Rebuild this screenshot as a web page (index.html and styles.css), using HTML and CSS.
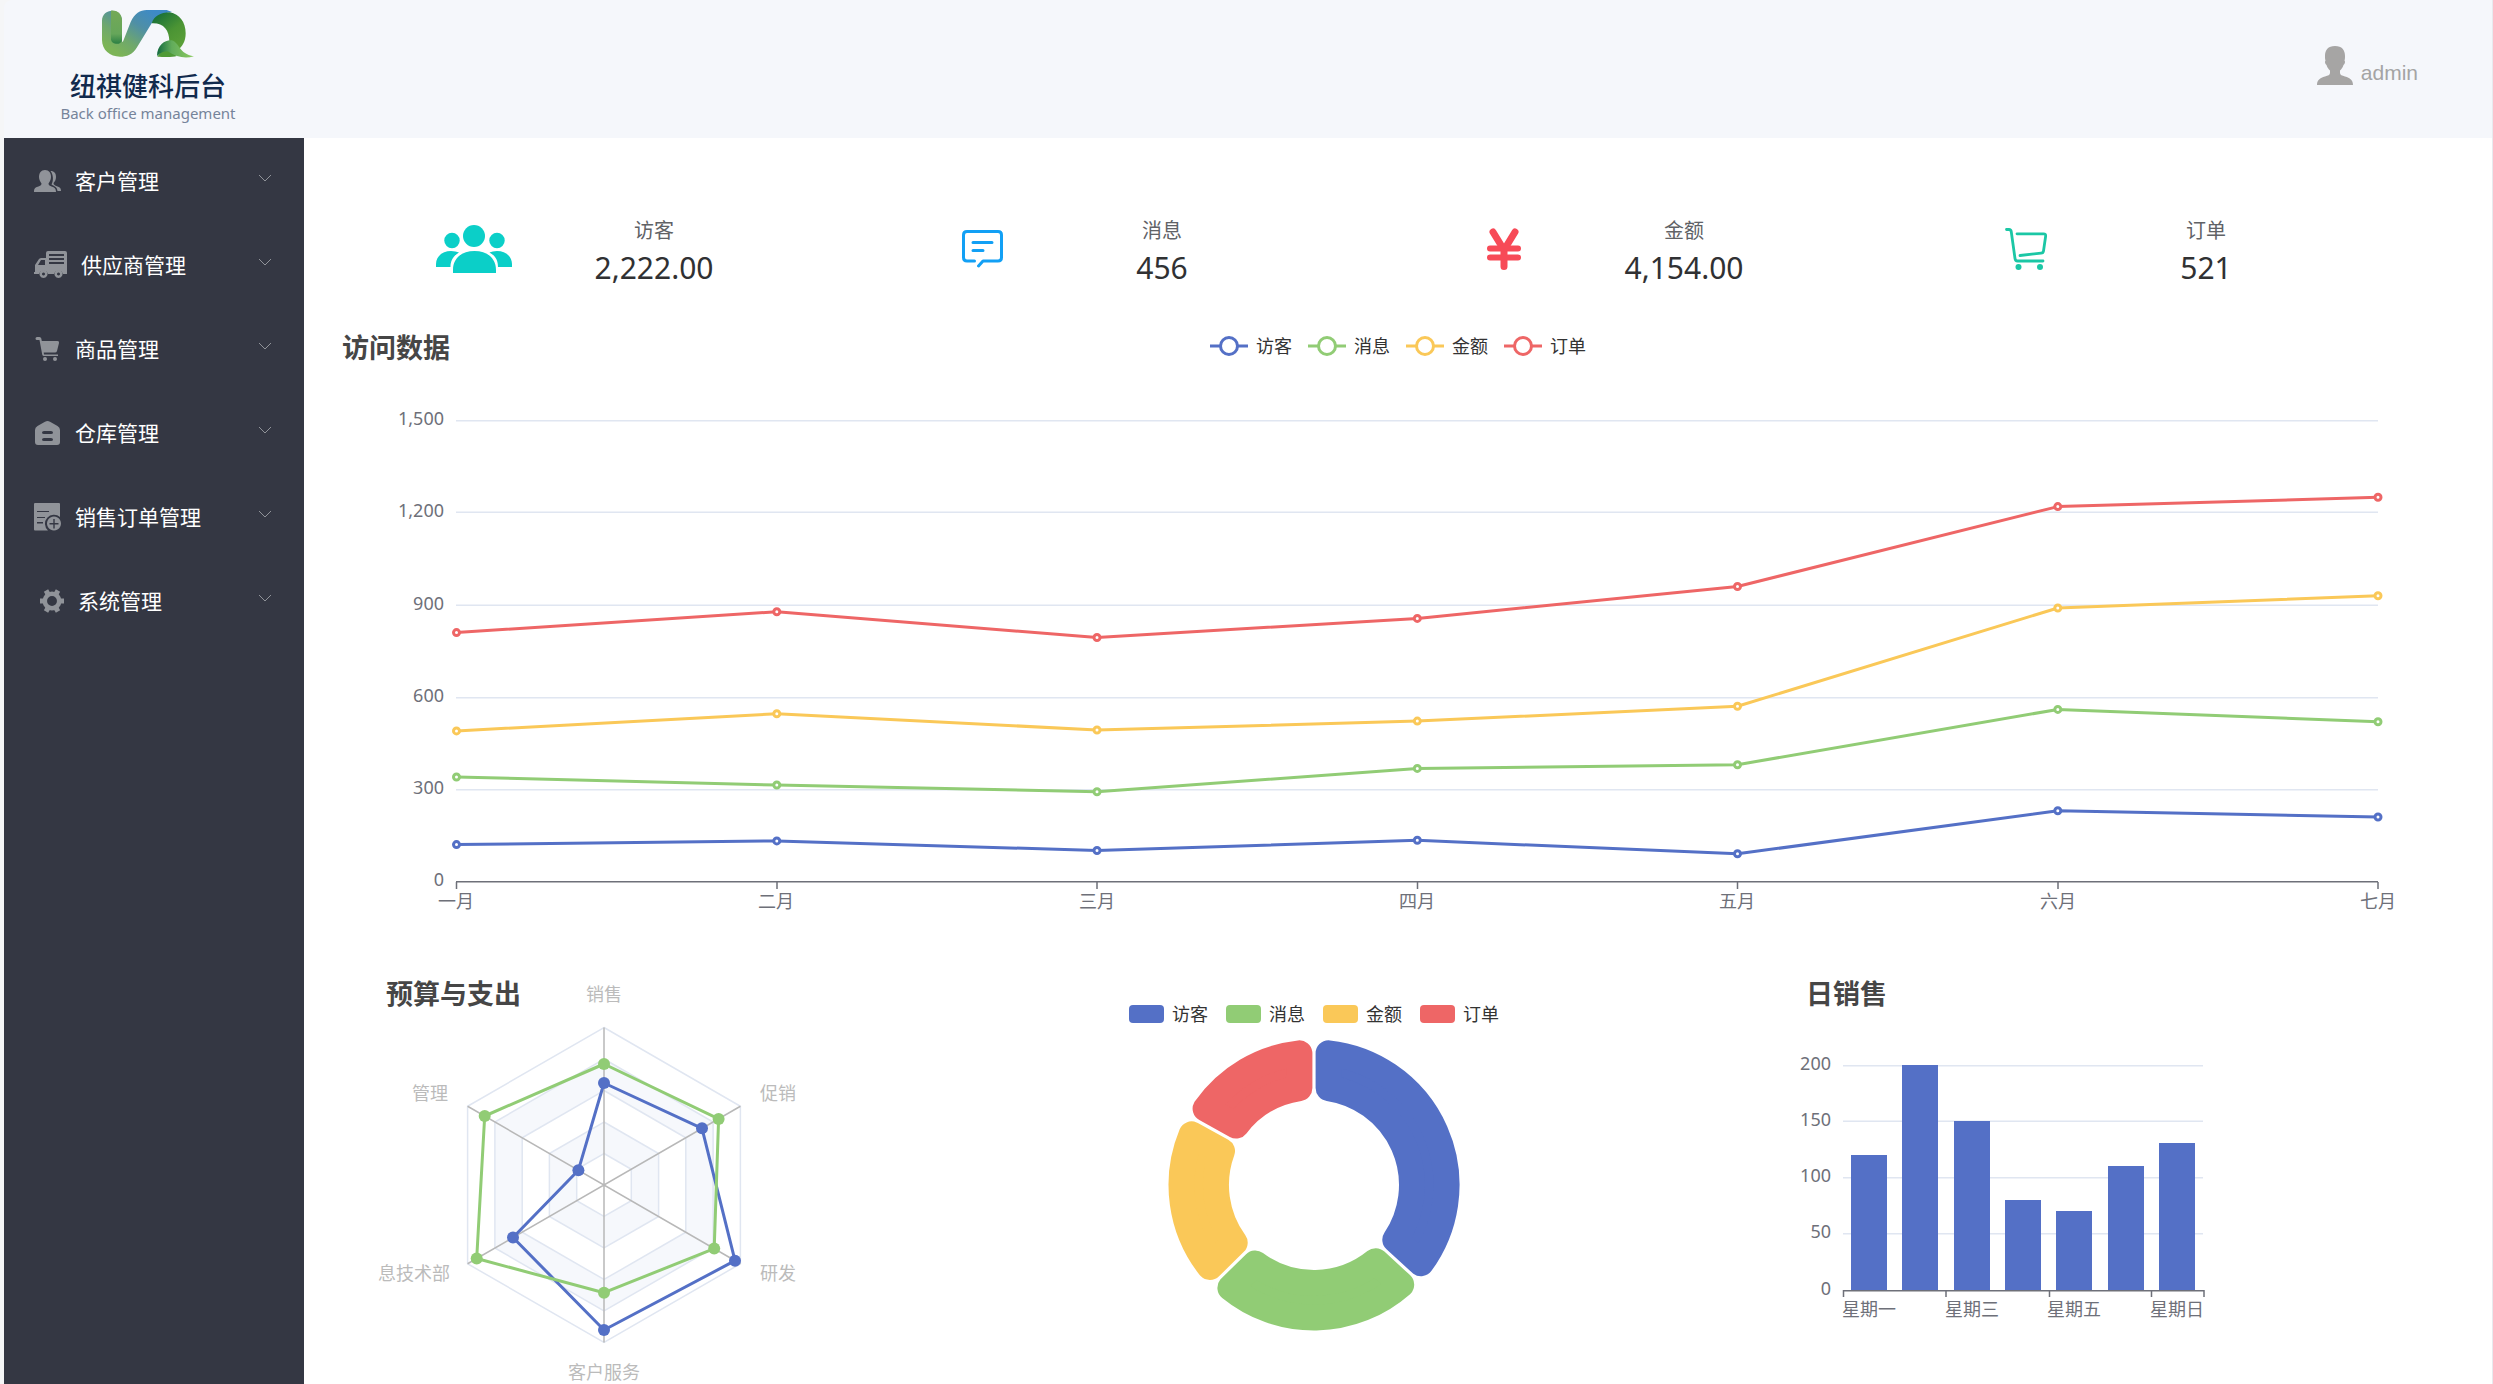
FILE: index.html
```html
<!DOCTYPE html>
<html lang="zh-CN">
<head>
<meta charset="utf-8">
<meta name="viewport" content="width=device-width, initial-scale=1">
<title>纽祺健科后台</title>
<link rel="stylesheet" href="styles.css">
</head>
<body>
<header class="topbar">
  <a class="brand" href="#">
    <svg class="brand-logo" viewBox="306 30 276 144" aria-hidden="true">
      <defs>
        <linearGradient id="ribbon" x1="0" y1="1" x2="1" y2="0">
          <stop offset="0.15" stop-color="#7cb457"/><stop offset="0.35" stop-color="#6fa86c"/><stop offset="0.6" stop-color="#4f8fa6"/><stop offset="0.85" stop-color="#3d8ac6"/>
        </linearGradient>
        <linearGradient id="fold" x1="0" y1="0" x2="0" y2="1">
          <stop offset="0" stop-color="#74a957"/><stop offset="0.7" stop-color="#66a65a"/><stop offset="1" stop-color="#2b7f43"/>
        </linearGradient>
        <linearGradient id="arch" x1="0" y1="0" x2="0.7" y2="1">
          <stop offset="0.1" stop-color="#176f38"/><stop offset="0.6" stop-color="#4b9434"/><stop offset="1" stop-color="#5a9f38"/>
        </linearGradient>
        <linearGradient id="leaf" x1="0" y1="0" x2="1" y2="0">
          <stop offset="0" stop-color="#11693d"/><stop offset="0.4" stop-color="#62ac5b"/><stop offset="1" stop-color="#8ccb60"/>
        </linearGradient>
      </defs>
      <path fill="url(#ribbon)" d="M306 62C306 22 366 22 366 62V122C367 128 368 127 370 122L392 66C404 40 420 30 440 30H500L516 36C484 40 470 50 455 70L412 140C398 164 380 170 360 170C330 170 306 150 306 120Z"/>
      <path fill="url(#fold)" d="M333 32C355 30 366 45 366 62V122A17 14 0 0 1 333 118Z"/>
      <path fill="url(#arch)" d="M455 70C462 48 480 38 510 37C538 42 557 66 557 100C557 124 547 140 534 150L508 124C508 90 490 68 455 70Z"/>
      <path fill="#4f9a36" d="M472 170C485 148 505 144 530 168C520 172 490 171 472 170Z"/>
      <path fill="url(#leaf)" d="M471 168C471 132 500 118 515 121C540 128 535 162 582 169C556 177 530 172 503 154C492 154 482 158 471 168Z"/>
    </svg>
    <span class="brand-name">纽祺健科后台</span>
    <span class="brand-sub">Back office management</span>
  </a>
  <a class="account" href="#">
    <svg class="account-icon" viewBox="0 0 36 39" aria-hidden="true"><path d="M18 0C25 0 28 4 28 10C28 12 28 13 27.500 14.500C28.500 15.500 28 18 26.500 19C25.500 22 24.500 23 23 24.500V27C23 29 25 29.500 28 30.500C33 32 36 34 36 39H0C0 34 3 32 8 30.500C11 29.500 13 29 13 27V24.500C11.500 23 10.500 22 9.500 19C8 18 7.500 15.500 8.500 14.500C8 13 8 12 8 10C8 4 11 0 18 0Z"/></svg>
    <span>admin</span>
  </a>
</header>

<div class="layout">
  <nav class="sidebar" aria-label="主菜单">
    <button class="menu-item" type="button">
      <svg width="27" height="24" viewBox="0 0 27 24" aria-hidden="true"><path d="M11 1C15 1 17 4 17 8C17 11 15.500 13 14.500 14.500C14.500 16 15.500 16.500 17 17.200C20 18.300 22 19 22 23H0C0 19 1.500 18.300 5 17.200C6.500 16.500 7.500 16 7.500 14.500C6.500 13 5 11 5 8C5 4 7 1 11 1ZM16.500 2C20.500 2 22 4.500 22 8C22 10.500 21 12.500 19.500 14C19.500 16 21 16.500 23 17.200C26 18.300 27 19 27 22H23.500C23 18 21 17.500 17.500 15.500C20 11 19 5 16.500 2Z"/></svg>
      <span>客户管理</span>
      <svg class="chevron" width="14" height="8" viewBox="0 0 14 8" aria-hidden="true"><path d="M1 1L7 7L13 1"/></svg>
    </button>
    <button class="menu-item" type="button">
      <svg width="33" height="28" viewBox="0 0 33 28" aria-hidden="true"><path fill-rule="evenodd" d="M14 0H31Q33 0 33 2V23H29A4.700 4.700 0 0 0 20 23H14A4.700 4.700 0 0 0 5 23H0V21H1V14L5 8Q6 7 7.500 7H12V2Q12 0 14 0ZM15 3V5H30V3ZM15 7V9H30V7ZM15 11V13H30V11ZM7 9L4 14H11V9Z"/><path fill-rule="evenodd" d="M9.500 19A4 4 0 1 1 9.490 19ZM9.500 21.500A1.500 1.500 0 1 0 9.510 21.500ZM24.500 19A4 4 0 1 1 24.490 19ZM24.500 21.500A1.500 1.500 0 1 0 24.510 21.500Z"/></svg>
      <span>供应商管理</span>
      <svg class="chevron" width="14" height="8" viewBox="0 0 14 8" aria-hidden="true"><path d="M1 1L7 7L13 1"/></svg>
    </button>
    <button class="menu-item" type="button">
      <svg width="27" height="24" viewBox="0 0 27 24" aria-hidden="true"><path d="M3 0H5.500Q7 0 7.300 1.500L7.800 4H23.500Q25.500 4 25 6L23 14Q22.500 15.500 21 15.500H9.700L10 17.500H24V19H10Q8.500 19 8.200 17.500L5.500 3H3A1.500 1.500 0 0 1 3 0Z"/><circle cx="11" cy="22" r="2"/><circle cx="21" cy="22" r="2"/></svg>
      <span>商品管理</span>
      <svg class="chevron" width="14" height="8" viewBox="0 0 14 8" aria-hidden="true"><path d="M1 1L7 7L13 1"/></svg>
    </button>
    <button class="menu-item" type="button">
      <svg width="27" height="24" viewBox="0 0 27 24" aria-hidden="true"><path fill-rule="evenodd" d="M11 .8Q13.500 -.6 16 .8L23.500 5Q26 6.500 26 9V21Q26 24 23 24H4Q1 24 1 21V9Q1 6.500 3.500 5ZM10 10Q8 10 8 11.500T10 13H17Q19 13 19 11.500T17 10ZM10 17Q8 17 8 18.500T10 20H17Q19 20 19 18.500T17 17Z"/></svg>
      <span>仓库管理</span>
      <svg class="chevron" width="14" height="8" viewBox="0 0 14 8" aria-hidden="true"><path d="M1 1L7 7L13 1"/></svg>
    </button>
    <button class="menu-item" type="button">
      <svg width="27" height="28" viewBox="0 0 27 28" aria-hidden="true"><path fill-rule="evenodd" d="M1 0H25Q26 0 26 1V14A8 8 0 0 0 14 27.500H1Q0 27.500 0 26.500V1Q0 0 1 0ZM3 8V9H15V8ZM3 14V15H11V14ZM3 19V20.500H9V19Z"/><path fill-rule="evenodd" d="M20 13.500A7 7 0 1 1 19.990 13.500ZM19.300 16V20H15.500V21.400H19.300V25.500H20.700V21.400H24.500V20H20.700V16Z"/></svg>
      <span>销售订单管理</span>
      <svg class="chevron" width="14" height="8" viewBox="0 0 14 8" aria-hidden="true"><path d="M1 1L7 7L13 1"/></svg>
    </button>
    <button class="menu-item" type="button">
      <svg width="30" height="24" viewBox="0 0 30 24" aria-hidden="true"><g transform="translate(18 12)"><circle r="7.200" fill="none" stroke="#909399" stroke-width="4.500"/><g stroke="#909399" stroke-width="5"><path d="M-12 0H-8M8 0H12M-6 -10.400L-4 -7M6 -10.400L4 -7M-6 10.400L-4 7M6 10.400L4 7"/></g></g></svg>
      <span>系统管理</span>
      <svg class="chevron" width="14" height="8" viewBox="0 0 14 8" aria-hidden="true"><path d="M1 1L7 7L13 1"/></svg>
    </button>
  </nav>

  <main class="content">
    <section class="stats" aria-label="统计">
      <div class="stat">
        <div class="stat-icon"><svg width="76" height="48" viewBox="0 0 76 48" fill="#0bcfc8" aria-hidden="true"><circle cx="38" cy="11" r="11"/><ellipse cx="16" cy="15.500" rx="7.700" ry="7.800"/><ellipse cx="61" cy="15.500" rx="7.700" ry="7.800"/><path d="M17 48V45C17 33 26 26 38.500 26S60 33 60 45V48ZM0 42V39C0 31 7 26 15 26C18 26 21 26.800 23 27.500C17 31 14.500 36 14.500 42ZM76 42V39C76 31 69 26 61 26C58 26 55.500 26.800 53.500 27.500C60 31 62 36 62 42Z"/></svg></div>
        <dl class="stat-text"><dt>访客</dt><dd>2,222.00</dd></dl>
      </div>
      <div class="stat">
        <div class="stat-icon"><svg width="41" height="38" viewBox="0 0 41 38" fill="none" stroke="#12a0f5" stroke-width="3" stroke-linecap="round" stroke-linejoin="round" aria-hidden="true"><path d="M12.500 31H5Q1.500 31 1.500 27.500V5Q1.500 1.500 5 1.500H36Q39.500 1.500 39.500 5V27.500Q39.500 31 36 31H21L16.500 36M11 12.500H30M11 20.500H21"/></svg></div>
        <dl class="stat-text"><dt>消息</dt><dd>456</dd></dl>
      </div>
      <div class="stat">
        <div class="stat-icon"><svg width="34" height="42" viewBox="0 0 34 42" fill="none" stroke="#f74a57" stroke-linecap="round" stroke-linejoin="round" aria-hidden="true"><path stroke-width="7" d="M6 4L17 22L28 4M17 22V38.500"/><path stroke-width="6" d="M3 20.500H31M3 29.500H31"/></svg></div>
        <dl class="stat-text"><dt>金额</dt><dd>4,154.00</dd></dl>
      </div>
      <div class="stat">
        <div class="stat-icon"><svg width="42" height="42" viewBox="0 0 42 42" fill="none" stroke="#1bc7a5" stroke-width="2.800" stroke-linecap="round" stroke-linejoin="round" aria-hidden="true"><path d="M1.500 1.500H4Q6 1.500 6.300 4L10 30.500Q10.300 33 12.500 33H38M12 5.800H38.500Q41 5.800 40.600 8.500L38.500 23Q38.200 25 36 25.200L15 27.500"/><g fill="#1bc7a5" stroke="none"><circle cx="13.500" cy="39" r="3"/><circle cx="35" cy="39" r="3"/></g></svg></div>
        <dl class="stat-text"><dt>订单</dt><dd>521</dd></dl>
      </div>
    </section>

    <section class="trend">
      <div class="trend-head">
        <h2>访问数据</h2>
        <ul class="legend">
          <li class="blue"><svg width="38" height="20" viewBox="0 0 38 20" aria-hidden="true"><path d="M0 10H38"/><circle cx="19" cy="10" r="8.500"/></svg>访客</li>
          <li class="green"><svg width="38" height="20" viewBox="0 0 38 20" aria-hidden="true"><path d="M0 10H38"/><circle cx="19" cy="10" r="8.500"/></svg>消息</li>
          <li class="yellow"><svg width="38" height="20" viewBox="0 0 38 20" aria-hidden="true"><path d="M0 10H38"/><circle cx="19" cy="10" r="8.500"/></svg>金额</li>
          <li class="red"><svg width="38" height="20" viewBox="0 0 38 20" aria-hidden="true"><path d="M0 10H38"/><circle cx="19" cy="10" r="8.500"/></svg>订单</li>
        </ul>
      </div>
      <svg class="chart" viewBox="0 0 2188 550" role="img" aria-label="访问数据">
        <defs>
          <marker id="dot-blue" markerUnits="userSpaceOnUse" markerWidth="10" markerHeight="10" refX="5" refY="5"><circle cx="5" cy="5" r="3" fill="#fff" stroke="#5470c6" stroke-width="3"/></marker>
          <marker id="dot-green" markerUnits="userSpaceOnUse" markerWidth="10" markerHeight="10" refX="5" refY="5"><circle cx="5" cy="5" r="3" fill="#fff" stroke="#91cc75" stroke-width="3"/></marker>
          <marker id="dot-yellow" markerUnits="userSpaceOnUse" markerWidth="10" markerHeight="10" refX="5" refY="5"><circle cx="5" cy="5" r="3" fill="#fff" stroke="#fac858" stroke-width="3"/></marker>
          <marker id="dot-red" markerUnits="userSpaceOnUse" markerWidth="10" markerHeight="10" refX="5" refY="5"><circle cx="5" cy="5" r="3" fill="#fff" stroke="#ee6666" stroke-width="3"/></marker>
        </defs>
        <path class="grid" d="M152 40.750H2074M152 132.250H2074M152 225.250H2074M152 317.750H2074M152 409.750H2074"/>
        <path class="axis" d="M152 501.750H2074M152.500 502v7M473 502v7M793 502v7M1113.500 502v7M1433.500 502v7M1754 502v7M2074 502v7"/>
        <g class="tick-y">
          <text x="140" y="45">1,500</text><text x="140" y="137">1,200</text><text x="140" y="230">900</text>
          <text x="140" y="322">600</text><text x="140" y="414">300</text><text x="140" y="506">0</text>
        </g>
        <g class="tick-x">
          <text x="152" y="528">一月</text><text x="472" y="528">二月</text><text x="793" y="528">三月</text><text x="1113" y="528">四月</text>
          <text x="1433" y="528">五月</text><text x="1754" y="528">六月</text><text x="2074" y="528">七月</text>
        </g>
        <polyline class="line blue dots-blue" points="152.500,464.600 472.800,460.900 793,470.500 1113.300,460.300 1433.500,473.800 1753.800,430.800 2074,437"/>
        <polyline class="line green dots-green" points="152.500,397 472.800,405 793,411.800 1113.300,388.400 1433.500,384.700 1753.800,329.400 2074,341.700"/>
        <polyline class="line yellow dots-yellow" points="152.500,350.900 472.800,333.700 793,350 1113.300,341.100 1433.500,326.300 1753.800,228 2074,215.700"/>
        <polyline class="line red dots-red" points="152.500,252.600 472.800,231.700 793,257.500 1113.300,238.400 1433.500,206.500 1753.800,126.600 2074,117.300"/>
      </svg>
    </section>

    <div class="panels">
      <section class="panel">
        <h2>预算与支出</h2>
        <svg class="chart" viewBox="0 0 452 414" role="img" aria-label="预算与支出">
          <g transform="translate(226 215)">
            <g stroke="#e0e6f1" stroke-width="1.500">
              <path fill="#fff" d="M0 -157.500L136.400 -78.750V78.750L0 157.500L-136.400 78.750V-78.750Z"/>
              <path fill="#f6f8fc" d="M0 -126L109.100 -63V63L0 126L-109.100 63V-63Z"/>
              <path fill="#fff" d="M0 -94.500L81.800 -47.250V47.250L0 94.500L-81.800 47.250V-47.250Z"/>
              <path fill="#f6f8fc" d="M0 -63L54.600 -31.500V31.500L0 63L-54.600 31.500V-31.500Z"/>
              <path fill="#fff" d="M0 -31.500L27.300 -15.750V15.750L0 31.500L-27.300 15.750V-15.750Z"/>
            </g>
            <path stroke="#b8b8b8" stroke-width="1.500" d="M0 -157.500V157.500M-136.400 -78.750L136.400 78.750M-136.400 78.750L136.400 -78.750"/>
            <g class="line blue"><path d="M0 -102L-25.600 -14.800L-91 52.500L0 145L131 75.700L98 -56.700Z"/></g>
            <g fill="#5470c6"><circle cy="-102" r="6"/><circle cx="-25.600" cy="-14.800" r="6"/><circle cx="-91" cy="52.500" r="6"/><circle cy="145" r="6"/><circle cx="131" cy="75.700" r="6"/><circle cx="98" cy="-56.700" r="6"/></g>
            <g class="line green"><path d="M0 -121L-119.300 -69L-127.300 73.500L0 107.700L110.200 63.600L114.600 -66.100Z"/></g>
            <g fill="#91cc75"><circle cy="-121" r="6"/><circle cx="-119.300" cy="-69" r="6"/><circle cx="-127.300" cy="73.500" r="6"/><circle cy="107.700" r="6"/><circle cx="110.200" cy="63.600" r="6"/><circle cx="114.600" cy="-66.100" r="6"/></g>
          </g>
          <g class="radar-label">
            <text x="226" y="31">销售</text><text x="52" y="130">管理</text><text x="400" y="130">促销</text>
            <text x="36" y="310">息技术部</text><text x="400" y="310">研发</text><text x="226" y="409">客户服务</text>
          </g>
        </svg>
      </section>

      <section class="panel donut">
        <ul class="legend blocks">
          <li class="blue">访客</li><li class="green">消息</li><li class="yellow">金额</li><li class="red">订单</li>
        </ul>
        <svg class="chart" viewBox="0 0 452 354" role="img" aria-label="访客、消息、金额、订单占比">
          <g transform="translate(226 155)" stroke-width="26" stroke-linejoin="round">
            <path fill="#5470c6" stroke="#5470c6" d="M14.600 -131.700A132.500 132.500 0 0 1 107 78.200L81.300 54.700A98 98 0 0 0 14.600 -96.900Z"/>
            <path fill="#91cc75" stroke="#91cc75" d="M87.200 99.700A132.500 132.500 0 0 1 -83.600 102.800L-58.800 78.400A98 98 0 0 0 61.600 76.200Z"/>
            <path fill="#fac858" stroke="#fac858" d="M-104.100 82A132.500 132.500 0 0 1 -122.400 -50.600L-92 -33.900A98 98 0 0 0 -79.300 57.600Z"/>
            <path fill="#ee6666" stroke="#ee6666" d="M-108.400 -76.300A132.500 132.500 0 0 1 -14.600 -131.700V-96.900A98 98 0 0 0 -77.900 -59.500Z"/>
          </g>
        </svg>
      </section>

      <section class="panel">
        <h2>日销售</h2>
        <svg class="chart" viewBox="0 0 452 414" role="img" aria-label="日销售">
          <path class="grid" d="M45 95.750H405M45 151.250H405M45 207.750H405M45 263.750H405"/>
          <g fill="#5470c6">
            <rect x="53" y="185" width="36" height="136"/><rect x="104" y="95" width="36" height="226"/><rect x="156" y="151" width="36" height="170"/>
            <rect x="207" y="230" width="36" height="91"/><rect x="258" y="241" width="36" height="80"/><rect x="310" y="196" width="36" height="125"/><rect x="361" y="173" width="36" height="148"/>
          </g>
          <path class="axis" d="M45 320.750H406M45.500 320v7M148 320v7M251.500 320v7M353.500 320v7M406 320v7"/>
          <g class="tick-y">
            <text x="33" y="100">200</text><text x="33" y="156">150</text><text x="33" y="212">100</text><text x="33" y="268">50</text><text x="33" y="325">0</text>
          </g>
          <g class="tick-x">
            <text x="71" y="346">星期一</text><text x="174" y="346">星期三</text><text x="276" y="346">星期五</text><text x="379" y="346">星期日</text>
          </g>
        </svg>
      </section>
    </div>
  </main>
</div>
</body>
</html>
```
FILE: styles.css
```css
* { box-sizing: border-box; }

body {
  margin: 0;
  min-height: 100vh;
  display: flex;
  flex-direction: column;
  padding-left: 4px;
  border-right: 1px solid #e8eaee;
  background: #f5f6f7;
  color: #303133;
  font-family: "Noto Sans", "Noto Sans CJK SC", sans-serif;
  font-size: 18px;
}

h2, ul, dl, dd { margin: 0; padding: 0; }
ul { list-style: none; }
a { color: inherit; text-decoration: none; }

/* Header */
.topbar {
  display: flex;
  justify-content: space-between;
  height: 138px;
  border-top-left-radius: 8px;
  background: #f5f7fb;
}

.brand {
  display: flex;
  flex-direction: column;
  align-items: center;
  width: 288px;
  padding-top: 10px;
}
.brand-logo { width: 92px; height: 48px; }
.brand-name {
  margin-top: 12px;
  color: #112a4d;
  font-size: 26px;
  font-weight: 500;
  line-height: 32px;
}
.brand-sub {
  color: #75849a;
  font-size: 15px;
  line-height: 22px;
}

.account {
  display: flex;
  align-items: flex-end;
  gap: 8px;
  height: 85px;
  padding-right: 74px;
  color: #a4a4a4;
  font-family: "Liberation Sans", sans-serif;
  font-size: 21px;
  line-height: 24px;
}
.account-icon { width: 36px; height: 39px; fill: #a6a5a4; }

/* Sidebar */
.layout { display: flex; flex: 1; }

.sidebar {
  flex: 0 0 300px;
  background: #343743;
}
.menu-item {
  display: flex;
  align-items: center;
  gap: 14px;
  width: 100%;
  height: 84px;
  padding: 2px 32px 0 30px;
  border: 0;
  background: none;
  color: #fff;
  font: inherit;
  font-size: 21px;
  text-align: left;
  cursor: pointer;
}
.menu-item span { padding-bottom: 2px; }
.menu-item svg { flex: none; fill: #909399; }
.menu-item .chevron {
  margin: 0 0 6px auto;
  fill: none;
  stroke: #909399;
  stroke-width: 1;
}

/* Content */
.content {
  flex: 1;
  min-width: 0;
  background: #fff;
}

.stats {
  display: grid;
  grid-template-columns: 508fr 522fr 522fr 507fr;
  padding: 73px 3px 0 126px;
}
.stat {
  display: flex;
  align-items: center;
  gap: 36px;
}
.stat-icon {
  display: flex;
  justify-content: center;
  width: 88px;
}
.stat-text {
  width: 200px;
  text-align: center;
}
.stat-text dt {
  padding-top: 2px;
  color: #606266;
  font-size: 20px;
  line-height: 36px;
}
.stat-text dd {
  font-size: 30px;
  line-height: 38px;
}

h2 {
  color: #464646;
  font-size: 27px;
  font-weight: 700;
  line-height: 36px;
}

.trend-head {
  display: grid;
  grid-template-columns: 1fr auto 1fr;
  align-items: start;
  height: 36px;
  margin-top: 43px;
  padding: 0 38px;
}

.legend {
  display: flex;
  gap: 16px;
  color: #333;
  line-height: 26px;
}
.trend-head .legend { padding-top: 3px; }
.legend li {
  display: flex;
  align-items: center;
  gap: 8px;
}
.legend svg {
  stroke: currentColor;
  stroke-width: 3;
}
.legend circle { fill: #fff; }
.legend .blue svg { color: #5470c6; }
.legend .green svg { color: #91cc75; }
.legend .yellow svg { color: #fac858; }
.legend .red svg { color: #ee6666; }

.blocks li::before {
  content: "";
  width: 35px;
  height: 18px;
  border-radius: 4px;
}
.blocks .blue::before { background: #5470c6; }
.blocks .green::before { background: #91cc75; }
.blocks .yellow::before { background: #fac858; }
.blocks .red::before { background: #ee6666; }

/* Charts */
.chart {
  display: block;
  width: 100%;
  height: auto;
}
.trend .chart { margin-top: 14px; }
.grid { stroke: #e0e6f1; stroke-width: 1.5; }
.axis { fill: none; stroke: #6e7079; stroke-width: 1.5; }
.tick-y, .tick-x { fill: #6e7079; }
.tick-y { text-anchor: end; }
.tick-x, .radar-label { text-anchor: middle; }
.radar-label { fill: #bbb; }

.line { fill: none; stroke-width: 3; stroke-linejoin: round; }
.line.blue { stroke: #5470c6; }
.line.green { stroke: #91cc75; }
.line.yellow { stroke: #fac858; }
.line.red { stroke: #ee6666; }
.dots-blue { marker: url(#dot-blue); }
.dots-green { marker: url(#dot-green); }
.dots-yellow { marker: url(#dot-yellow); }
.dots-red { marker: url(#dot-red); }

.panels {
  display: grid;
  grid-template-columns: repeat(3, minmax(0, 1fr));
  gap: 258px;
  margin-top: 40px;
  padding: 0 242px 0 74px;
}
/* The title shares the chart's cell, so it sits over the chart's top left corner. */
.panel { display: grid; align-content: start; }
.panel > h2, .panel > .chart { grid-area: 1 / 1; }
.panel > h2 { padding: 6px 0 0 8px; }

.panel.donut { grid-template-rows: 60px auto; }
.donut .legend {
  grid-area: 1 / 1;
  align-self: end;
  justify-content: center;
  gap: 18px;
  margin-bottom: 3px;
}
.donut > .chart { grid-area: 2 / 1; }
```
